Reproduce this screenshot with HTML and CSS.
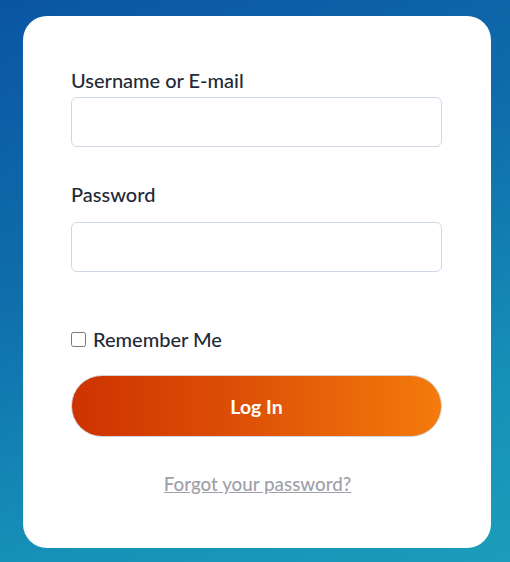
FILE: index.html
```html
<!DOCTYPE html>
<html>
<head>
<meta charset="utf-8">
<link rel="stylesheet" href="styles.css">
</head>
<body>
<div class="page">
  <form class="card">
    <label class="label first" for="user">Username or E-mail</label>
    <input class="field" id="user" type="text">
    <label class="label second" for="pass">Password</label>
    <input class="field" id="pass" type="password">
    <label class="remember"><input type="checkbox" class="check"><span>Remember Me</span></label>
    <button type="button" class="btn">Log In</button>
    <a class="forgot" href="#">Forgot your password?</a>
  </form>
</div>
</body>
</html>
```
FILE: styles.css
```css
html, body {
  margin: 0;
  padding: 0;
  height: 100%;
}
body {
  background: linear-gradient(160deg, #0a55a3 0%, #0f6eab 40%, #1690b8 75%, #1b9db9 100%);
  font-family: "Lato", "Open Sans", sans-serif;
  overflow: hidden;
}
.page {
  padding: 16px 19px 14px 23px;
  height: 562px;
  box-sizing: border-box;
}
.card {
  background: #fff;
  border-radius: 24px;
  height: 532px;
  box-sizing: border-box;
  padding: 53px 49px 0 48px;
  display: flex;
  flex-direction: column;
}
.label {
  font-size: 20px;
  line-height: 22px;
  color: #1f2a37;
  font-weight: 500;
}
.label.first { margin-bottom: 6px; }
.label.second { margin-top: 36px; margin-bottom: 17px; }
.field {
  display: block;
  height: 50px;
  box-sizing: border-box;
  border: 1px solid #cfd8ea;
  border-radius: 6px;
  margin: 0;
  outline: none;
}
.remember {
  margin-top: 56px;
  display: flex;
  align-items: center;
  font-size: 20px;
  line-height: 22px;
  font-weight: 500;
  color: #1f2a37;
}
.check {
  width: 15px;
  height: 15px;
  margin: 0 7px 0 0;
}
.btn {
  margin-top: 25px;
  height: 62px;
  border-radius: 31px;
  border: 1px solid #d0d4dc;
  background: linear-gradient(90deg, #cd3300 0%, #dd4f06 45%, #f47b0c 100%);
  color: #fff;
  font-family: "Lato", sans-serif;
  font-weight: 700;
  font-size: 19.5px;
}
.forgot {
  margin-top: 36px;
  align-self: center;
  margin-right: -2px;
  font-size: 18.8px;
  line-height: 22px;
  font-weight: 500;
  color: #a0a1a8;
  text-decoration: underline;
}
```
